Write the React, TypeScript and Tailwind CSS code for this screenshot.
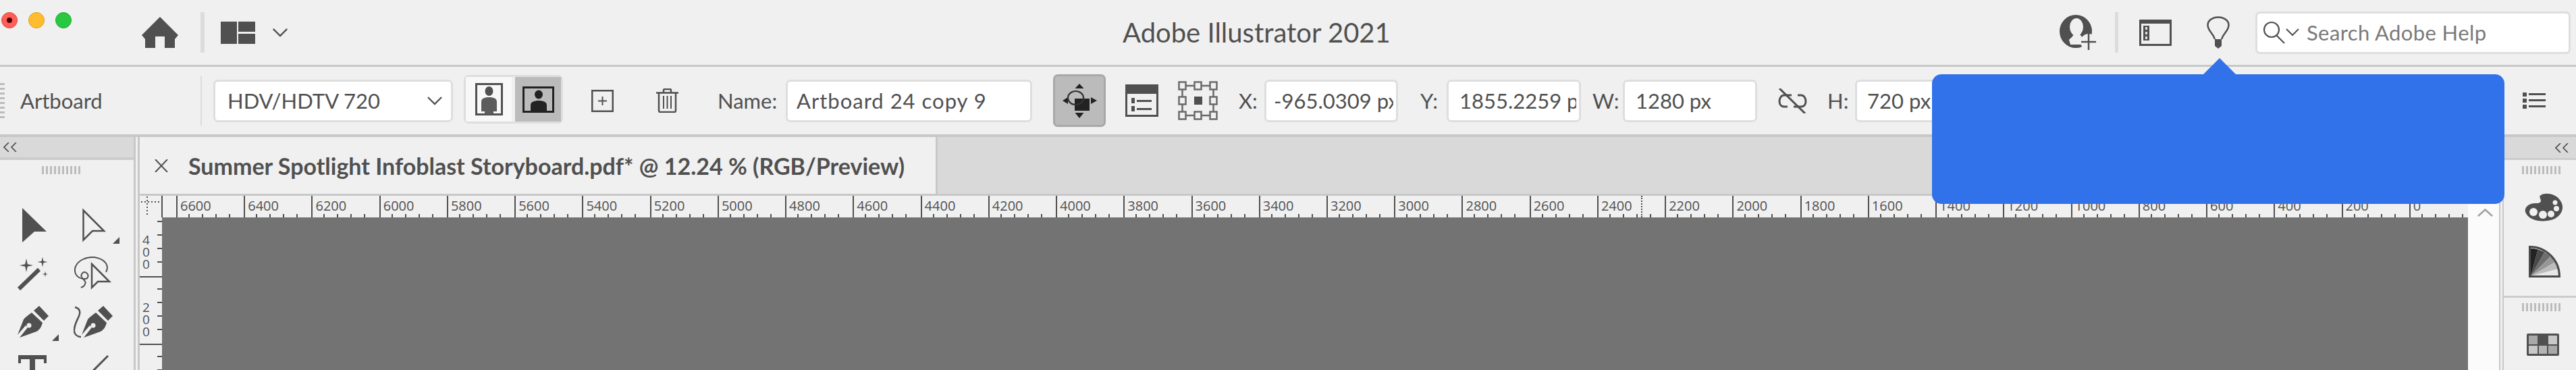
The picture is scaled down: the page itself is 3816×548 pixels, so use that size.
import React from 'react';

const INK = '#505050';
const topLabels = [6600, 6400, 6200, 6000, 5800, 5600, 5400, 5200, 5000, 4800, 4600, 4400, 4200, 4000, 3800, 3600, 3400, 3200, 3000, 2800, 2600, 2400, 2200, 2000, 1800, 1600, 1400, 1200, 1000, 800, 600, 400, 200, 0];

function Grip() {
  return (
    <div className="flex gap-[3px]">
      {[0, 1, 2, 3, 4, 5, 6, 7, 8, 9].map(i => (
        <div key={i} className="w-[3px] h-[12px] bg-[#bcbcbc]" />
      ))}
    </div>
  );
}

function Chevron({ className }: { className: string }) {
  return (
    <svg className={className} viewBox="0 0 24 14" fill="none" stroke={INK} strokeWidth="2.5">
      <path d="M1 1l11 11L23 1" />
    </svg>
  );
}

function Collapse({ className }: { className: string }) {
  return (
    <svg className={className} width="20" height="14" viewBox="0 0 20 14" fill="none" stroke="#4a4a4a" strokeWidth="1.6">
      <path d="M8 0L1 7l7 7M19 0l-7 7 7 7" />
    </svg>
  );
}

function Input({ className, value }: { className: string; value: string }) {
  return (
    <div className={`${className} h-[63px] flex items-center bg-white border-[3px] border-[#dedede] rounded-[7px] shrink-0 text-[31px] text-[#505050]`}>
      <div className="flex-1 min-w-0 mr-[4px] overflow-hidden whitespace-nowrap">{value}</div>
    </div>
  );
}

function star(cx: number, cy: number, r: number) {
  const k = r * 0.18;
  return `M${cx} ${cy - r}L${cx + k} ${cy - k}L${cx + r} ${cy}L${cx + k} ${cy + k}L${cx} ${cy + r}L${cx - k} ${cy + k}L${cx - r} ${cy}L${cx - k} ${cy - k}Z`;
}

function PenNib({ x = 0 }: { x?: number }) {
  return (
    <g transform={`translate(${x} 0)`}>
      <path d="M33 0L47 15L40 22L25 7Z" fill={INK} />
      <path d="M22 10L38 25C36 32 33 36 29 38L4 47L16 32L13 29L1 43L10 20C13 16 18 13 22 10Z" fill={INK} />
      <circle cx="18" cy="29" r="3.5" fill="#f0f0f0" />
    </g>
  );
}

function Corner() {
  return (
    <svg className="absolute left-[74px] top-[54px]" width="10" height="10" viewBox="0 0 10 10">
      <path d="M10 0V10H0Z" fill={INK} />
    </svg>
  );
}

function ColorGuide() {
  const grays = ['#222222', '#484848', '#6e6e6e', '#969696', '#bcbcbc', '#e8e8e8'];
  const cx = 3;
  const cy = 45;
  const r = 41;
  return (
    <svg width="47" height="47" viewBox="0 0 47 47">
      {grays.map((g, i) => {
        const a = (i * Math.PI) / 12;
        const b = ((i + 1) * Math.PI) / 12;
        const d = `M${cx} ${cy}L${cx + r * Math.sin(a)} ${cy - r * Math.cos(a)}A${r} ${r} 0 0 1 ${cx + r * Math.sin(b)} ${cy - r * Math.cos(b)}Z`;
        return <path key={g} d={d} fill={g} />;
      })}
      <path d="M1.500 1.500A44 44 0 0 1 45.500 45.500H1.500Z" fill="none" stroke="#4a4a4a" strokeWidth="3" />
    </svg>
  );
}

export default function App() {
  return (
    <div
      className="relative w-[3816px] h-[548px] overflow-hidden bg-[#f0f0f0] flex flex-col text-[#505050]"
      style={{ fontFamily: 'Lato, "Noto Sans", sans-serif' }}
    >
      {/* title bar */}
      <div className="h-[99px] shrink-0 flex items-center border-b-[3px] border-[#c8c8c8]">
        <div className="flex gap-[16px] ml-[2px] -mt-[36px]">
          <div className="w-[24px] h-[24px] rounded-full bg-[#ff5f57] border border-[#e0443e] flex items-center justify-center">
            <div className="w-[8px] h-[8px] rounded-full bg-[#4d0000]" />
          </div>
          <div className="w-[24px] h-[24px] rounded-full bg-[#febc2e] border border-[#dea123]" />
          <div className="w-[24px] h-[24px] rounded-full bg-[#28c840] border border-[#1aab29]" />
        </div>
        <svg className="ml-[104px] shrink-0" width="54" height="46" viewBox="0 0 54 46">
          <path d="M27 0L54 27L49 33V46H34V29H20V46H5V33L0 27Z" fill={INK} />
        </svg>
        <div className="ml-[33px] w-[6px] h-[60px] bg-[#dcdcdc] shrink-0" />
        <svg className="ml-[24px] shrink-0" width="51" height="33" viewBox="0 0 51 33">
          <path d="M0 0H24V33H0ZM26 0H51V15H26ZM26 18H51V33H26Z" fill={INK} />
        </svg>
        <Chevron className="ml-[25px] w-[24px] h-[13px] shrink-0" />
        <div className="ml-[1236px] w-[393px] text-[40px] whitespace-nowrap shrink-0">Adobe Illustrator 2021</div>
        <svg className="ml-[995px] shrink-0" width="54" height="52" viewBox="0 0 54 52">
          <ellipse cx="24" cy="24.500" rx="24" ry="24.500" fill={INK} />
          <ellipse cx="25" cy="18" rx="10" ry="13" fill="#f0f0f0" />
          <path d="M14 37C18 33 21 31 21 27H30C30 31 34 33 38 36L36 44H16Z" fill="#f0f0f0" />
          <circle cx="43" cy="40" r="12" fill="#f0f0f0" />
          <path d="M43 28V52M32 40H54" stroke={INK} strokeWidth="2.500" />
        </svg>
        <div className="ml-[28px] w-[5px] h-[60px] bg-[#dcdcdc] shrink-0" />
        <svg className="ml-[31px] shrink-0" width="48" height="39" viewBox="0 0 48 39">
          <rect x="1.500" y="1.500" width="45" height="36" fill="none" stroke={INK} strokeWidth="3" />
          <rect x="1" y="1" width="46" height="5" fill={INK} />
          <rect x="6" y="9" width="9" height="22" fill={INK} />
          <rect x="9" y="11" width="3" height="4" fill="#e0e0e0" />
          <rect x="9" y="18" width="3" height="4" fill="#e0e0e0" />
          <rect x="9" y="25" width="3" height="4" fill="#e0e0e0" />
        </svg>
        <svg className="ml-[52px] shrink-0" width="34" height="48" viewBox="0 0 34 48">
          <path d="M12 34C9 24 1.500 22 1.500 13C1.500 6 9 1.500 17 1.500S32.500 6 32.500 13C32.500 22 25 24 22 34" fill="none" stroke={INK} strokeWidth="2.500" />
          <path d="M12 34H22V44L17 48L12 44Z" fill={INK} />
        </svg>
        <div className="ml-[38px] w-[467px] h-[63px] bg-white border-[3px] border-[#dedede] rounded-[7px] flex items-center shrink-0">
          <svg className="ml-[8px] shrink-0" width="54" height="34" viewBox="0 0 54 34">
            <circle cx="13" cy="13" r="11" fill="none" stroke={INK} strokeWidth="2.200" />
            <path d="M20 21L32 33" stroke={INK} strokeWidth="2.200" />
            <path d="M35 12L44 21L53 12" fill="none" stroke={INK} strokeWidth="2" />
          </svg>
          <span className="ml-[11px] text-[31px] tracking-[0.4px] text-[#7a7a7a] whitespace-nowrap">Search Adobe Help</span>
        </div>
      </div>

      {/* options bar */}
      <div className="h-[104px] shrink-0 flex items-center border-b-[4px] border-[#c8c8c8]">
        <div className="flex flex-col gap-[4px] w-[7px] shrink-0">
          {[0, 1, 2, 3, 4, 5, 6, 7].map(i => (
            <div key={i} className="h-[3px] bg-[#bcbcbc]" />
          ))}
        </div>
        <div className="ml-[23px] w-[267px] text-[31px] shrink-0">Artboard</div>
        <div className="w-[2px] h-[74px] bg-[#dcdcdc] shrink-0" />
        <div className="ml-[17px] w-[355px] h-[63px] bg-white border-[3px] border-[#dedede] rounded-[7px] flex items-center justify-between pl-[18px] pr-[13px] text-[31px] shrink-0">
          <span className="whitespace-nowrap">HDV/HDTV 720</span>
          <Chevron className="w-[22px] h-[13px]" />
        </div>
        <div className="ml-[16px] w-[147px] h-[72px] -mt-[4px] border-[3px] border-[#dedede] rounded-[7px] flex shrink-0">
          <div className="w-[70px] bg-[#f8f8f8] flex items-center justify-center">
            <svg width="41" height="48" viewBox="0 0 41 48">
              <rect x="1.500" y="1.500" width="38" height="45" fill="none" stroke={INK} strokeWidth="3" />
              <ellipse cx="20.500" cy="12" rx="6" ry="7" fill={INK} />
              <path d="M9 28C9 23 13 21 20.500 21S32 23 32 28V42H27V46H14V42H9Z" fill="#5c5c5c" />
            </svg>
          </div>
          <div className="ml-[5px] w-[69px] bg-[#bbbbbb] flex items-center justify-center">
            <svg width="47" height="39" viewBox="0 0 47 39">
              <rect x="1.500" y="1.500" width="44" height="36" fill="none" stroke="#222222" strokeWidth="3" />
              <ellipse cx="24" cy="12" rx="6" ry="6.500" fill="#222222" />
              <path d="M12 37V28C12 23 17 21 24 21S36 23 36 28V37Z" fill="#222222" />
            </svg>
          </div>
        </div>
        <svg className="ml-[42px] shrink-0" width="33" height="33" viewBox="0 0 33 33">
          <rect x="1.250" y="1.250" width="30.500" height="30.500" fill="none" stroke={INK} strokeWidth="2.500" />
          <path d="M16.500 10V23M10 16.500H23" stroke={INK} strokeWidth="2" />
        </svg>
        <svg className="ml-[63px] shrink-0" width="33" height="36" viewBox="0 0 33 36">
          <path d="M0 6.500H33M11 6V2.500C11 1.500 12 1 13 1H20C21 1 22 1.500 22 2.500V6" fill="none" stroke={INK} strokeWidth="2.500" />
          <path d="M4 7V33C4 34 5 35 6 35H27C28 35 29 34 29 33V7" fill="none" stroke={INK} strokeWidth="2.500" />
          <path d="M11 11V30M16.500 11V30M22 11V30" stroke={INK} strokeWidth="2" />
        </svg>
        <div className="ml-[58px] w-[101px] text-[31px] shrink-0">Name:</div>
        <Input className="w-[365px] pl-[13px] tracking-[1px]" value="Artboard 24 copy 9" />
        <div className="ml-[31px] w-[78px] h-[78px] -mt-[1px] bg-[#bbbbbb] border-[3px] border-[#a8a8a8] rounded-[7px] flex items-center justify-center shrink-0">
          <svg width="60" height="58" viewBox="0 0 60 58">
            <path d="M30 4L36.500 11H23.500ZM30 55L36.500 47H23.500ZM5 29L13 24V34ZM56 29L47 24V34Z" fill="#222222" />
            <rect x="23" y="26" width="22" height="18" fill="#222222" />
            <ellipse cx="24.500" cy="25" rx="11.500" ry="10" fill="none" stroke="#333333" strokeWidth="2.200" />
          </svg>
        </div>
        <svg className="ml-[29px] shrink-0" width="49" height="48" viewBox="0 0 49 48">
          <rect x="1.500" y="1.500" width="46" height="45" fill="none" stroke={INK} strokeWidth="3" />
          <rect x="0" y="0" width="49" height="14" fill={INK} />
          <rect x="9" y="20" width="5" height="8" fill={INK} />
          <rect x="17" y="23" width="22" height="3" fill={INK} />
          <rect x="9" y="32" width="5" height="8" fill={INK} />
          <rect x="17" y="35" width="22" height="3" fill={INK} />
        </svg>
        <svg className="ml-[29px] shrink-0" width="59" height="58" viewBox="0 0 59 58">
          <g fill="none" stroke="#6a6a6a" strokeWidth="2.500">
            <rect x="1.500" y="1.500" width="10" height="11" />
            <rect x="24.500" y="1.500" width="10" height="11" />
            <rect x="47.500" y="1.500" width="10" height="11" />
            <rect x="1.500" y="23.500" width="10" height="11" />
            <rect x="47.500" y="23.500" width="10" height="11" />
            <rect x="1.500" y="45.500" width="10" height="11" />
            <rect x="24.500" y="45.500" width="10" height="11" />
            <rect x="47.500" y="45.500" width="10" height="11" />
            <path d="M12 7H24M35 7H47M12 51H24M35 51H47M6.500 13V23M52.500 13V23M6.500 35V45M52.500 35V45" />
          </g>
          <rect x="24" y="23" width="12" height="12" fill={INK} />
        </svg>
        <div className="ml-[31px] w-[38px] text-[31px] shrink-0">X:</div>
        <Input className="w-[198px] pl-[11px]" value="-965.0309 px" />
        <div className="ml-[33px] w-[39px] text-[31px] shrink-0">Y:</div>
        <Input className="w-[199px] pl-[16px]" value="1855.2259 px" />
        <div className="ml-[17px] w-[45px] text-[31px] shrink-0">W:</div>
        <Input className="w-[199px] pl-[16px]" value="1280 px" />
        <svg className="ml-[31px] shrink-0" width="43" height="37" viewBox="0 0 43 37" fill="none" stroke={INK} strokeWidth="3">
          <path d="M2 0L40 37" stroke={INK} />
          <path d="M20 10H9C5 10 2 14 2 19S5 27 9 27H14" />
          <path d="M23 27H34C38 27 41 24 41 19S38 10 34 10H29" />
        </svg>
        <div className="ml-[30px] w-[41px] text-[31px] shrink-0">H:</div>
        <Input className="w-[200px] pl-[15px]" value="720 px" />
        <svg className="ml-[789px] shrink-0" width="34" height="24" viewBox="0 0 34 24">
          <path d="M0 0H6V6H0ZM0 9H6V15H0ZM0 18H6V24H0ZM9 1H34V4H9ZM9 10H34V13H9ZM9 19H34V22H9Z" fill={INK} />
        </svg>
      </div>

      {/* body */}
      <div className="flex-1 min-h-0 flex">
        {/* tools panel */}
        <div className="w-[198px] shrink-0 overflow-hidden">
          <div className="h-[34px] bg-[#d9d9d9] border-b-[4px] border-[#cccccc] flex items-center">
            <Collapse className="ml-[5px]" />
          </div>
          <div className="mt-[9px] ml-[62px]">
            <Grip />
          </div>
          <div className="mt-[39px] ml-[3px] grid grid-cols-[90px_90px] auto-rows-[72px]">
            <div className="relative flex items-center justify-center">
              <svg className="ml-[6px]" width="36" height="51" viewBox="0 0 36 51">
                <path d="M0 0L36 35H18L0 51Z" fill={INK} />
              </svg>
            </div>
            <div className="relative flex items-center justify-center">
              <svg className="ml-[4px]" width="36" height="51" viewBox="0 0 36 51">
                <path d="M1.500 3.500L32 34H15L1.500 47.500Z" fill="none" stroke={INK} strokeWidth="2.500" />
              </svg>
              <Corner />
            </div>
            <div className="relative flex items-center justify-center">
              <svg width="46" height="49" viewBox="0 0 46 49">
                <path d="M3 47L33 18" stroke={INK} strokeWidth="6" />
                <path d={star(14, 12, 10)} fill={INK} />
                <path d={star(38, 7, 7.5)} fill={INK} />
                <path d={star(42, 25, 4.5)} fill={INK} />
              </svg>
            </div>
            <div className="relative flex items-center justify-center">
              <svg width="56" height="50" viewBox="0 0 56 50" fill="none" stroke={INK} strokeWidth="2">
                <path d="M26 11L52 37H35L26 46Z" strokeWidth="2.500" />
                <path d="M47 23C52 14 47 4 30 1C16 0 3 7 1 18C0 27 6 33 16 33C21 33 22 27 18 24C13 21 8 27 12 32C16 36 19 38 14 44L10 46" />
              </svg>
            </div>
            <div className="relative flex items-center justify-center">
              <svg width="47" height="48" viewBox="0 0 47 48">
                <PenNib />
              </svg>
              <Corner />
            </div>
            <div className="relative flex items-center justify-center">
              <svg width="59" height="48" viewBox="0 0 59 48">
                <path d="M2 2C8 3 11 8 8 15C5 22 0 30 1 38C2 43 6 46 11 46" fill="none" stroke={INK} strokeWidth="2.500" />
                <PenNib x={11} />
              </svg>
            </div>
            <div className="relative flex items-center justify-center">
              <svg width="42" height="46" viewBox="0 0 42 46">
                <path d="M0 0H42V12H38V6H25V46H17V6H4V12H0Z" fill={INK} />
              </svg>
            </div>
            <div className="relative flex items-center justify-center">
              <svg width="46" height="46" viewBox="0 0 46 46">
                <path d="M45 1L1 45" stroke={INK} strokeWidth="3" />
              </svg>
            </div>
          </div>
        </div>
        <div className="w-[9px] shrink-0 border-x-[3px] border-[#c8c8c8]" />

        {/* document area */}
        <div className="w-[3495px] shrink-0 flex flex-col">
          <div className="h-[87px] shrink-0 bg-[#d9d9d9] border-b-[3px] border-[#c8c8c8] flex">
            <div className="w-[1182px] bg-[#f0f0f0] border-r-[3px] border-[#c8c8c8] flex items-center">
              <svg className="ml-[22px] shrink-0" width="20" height="19" viewBox="0 0 20 19">
                <path d="M1 0L19 19M19 0L1 19" stroke={INK} strokeWidth="2" />
              </svg>
              <span className="ml-[30px] text-[34px] font-bold whitespace-nowrap">
                Summer Spotlight Infoblast Storyboard.pdf* @ 12.24 % (RGB/Preview)
              </span>
            </div>
          </div>
          <div className="flex-1 min-h-0 flex">
            <div className="w-[3449px] shrink-0 flex flex-col">
              <div
                className="relative h-[32px] shrink-0 flex overflow-hidden text-[20px] leading-[24px] bg-[#f0f0f0]"
                style={{ fontFamily: '"Open Sans", sans-serif' }}
              >
                <svg className="shrink-0" width="32" height="32" viewBox="0 0 32 32" fill="none" stroke={INK} strokeWidth="2" strokeDasharray="2 3">
                  <path d="M2 9H31M11 1V31" />
                </svg>
                <div className="w-[22px] h-full shrink-0 border-l-2 border-[#505050]" />
                {topLabels.map(v => (
                  <div key={v} className="w-[100.240px] h-full shrink-0 border-l-2 border-[#505050] flex flex-col justify-between">
                    <div className="pl-[4px] pt-[3px] whitespace-nowrap">{v}</div>
                    <div className="flex -ml-[2px]">
                      {[0, 1, 2, 3].map(i => (
                        <div key={i} className="w-[20px] h-[6px] border-r-2 border-[#505050]" />
                      ))}
                    </div>
                  </div>
                ))}
                <div className="absolute left-[2224px] top-0 h-full border-l-2 border-dotted border-[#505050]" />
              </div>
              <div className="flex-1 min-h-0 flex">
                <div
                  className="w-[33px] shrink-0 overflow-hidden text-[19px] leading-[18px]"
                  style={{ fontFamily: '"Open Sans", sans-serif' }}
                >
                  <div className="-mt-[13px]">
                    {['400', '200', ''].map(v => (
                      <div key={v} className="h-[100px] border-t-2 border-[#505050] flex justify-between">
                        <div className="ml-[4px] pt-[35px] w-[12px] break-all">{v}</div>
                        <div className="w-[7px] -mt-[2px]">
                          {[0, 1, 2, 3].map(i => (
                            <div key={i} className="h-[20px] border-b-2 border-[#505050]" />
                          ))}
                        </div>
                      </div>
                    ))}
                  </div>
                </div>
                <div className="flex-1 bg-[#737373]" />
              </div>
            </div>
            <div className="w-[46px] shrink-0 bg-[#fbfbfb] pt-[19px] pl-[14px]">
              <svg width="23" height="12" viewBox="0 0 23 12" fill="none" stroke="#a0a0a0" strokeWidth="2.500">
                <path d="M1 11L11.500 1.500L22 11" />
              </svg>
            </div>
          </div>
        </div>

        {/* right dock */}
        <div className="w-[7px] shrink-0 border-x-[2px] border-[#c8c8c8]" />
        <div className="flex-1 min-w-0 overflow-hidden">
          <div className="h-[34px] bg-[#d9d9d9] border-b-[3px] border-[#cccccc] flex items-center justify-end pr-[11px]">
            <Collapse className="" />
          </div>
          <div className="mt-[9px] ml-[27px]">
            <Grip />
          </div>
          <svg className="mt-[28px] ml-[31px]" width="57" height="42" viewBox="0 0 57 42">
            <path d="M24 3C30-1 45 0 52 10C60 20 56 33 42 39C28 44 6 42 1 28C-1 20 8 14 18 15C24 15 25 12 23 8C22 6 22 4 24 3Z" fill={INK} />
            <circle cx="13" cy="28" r="6" fill="#f0f0f0" />
            <circle cx="27" cy="32" r="6" fill="#f0f0f0" />
            <circle cx="39" cy="31" r="5" fill="#f0f0f0" />
            <circle cx="47" cy="23" r="4" fill="#f0f0f0" />
            <circle cx="45" cy="14" r="3.500" fill="#f0f0f0" />
          </svg>
          <div className="mt-[36px] ml-[37px] w-[47px] h-[47px]">
            <ColorGuide />
          </div>
          <div className="mt-[27px] h-[3px] bg-[#cccccc]" />
          <div className="mt-[8px] ml-[27px]">
            <Grip />
          </div>
          <div className="mt-[33px] ml-[34px] w-[48px] h-[33px] bg-[#505050] rounded-[2px] p-[3px] grid grid-cols-3 grid-rows-2 gap-[2px]">
            <div className="bg-[#a8a8a8]" />
            <div />
            <div className="bg-[#c8c8c8]" />
            <div className="bg-[#c8c8c8]" />
            <div className="bg-[#b4b4b4]" />
            <div className="bg-[#a8a8a8]" />
          </div>
        </div>
      </div>

      {/* blue callout over the toolbar */}
      <div className="absolute left-[3264px] top-[86px] w-0 h-0 border-x-[24px] border-x-transparent border-b-[24px] border-b-[#3172ea]" />
      <div className="absolute left-[2862px] top-[110px] w-[848px] h-[192px] bg-[#3172ea] rounded-[14px]" />
    </div>
  );
}
